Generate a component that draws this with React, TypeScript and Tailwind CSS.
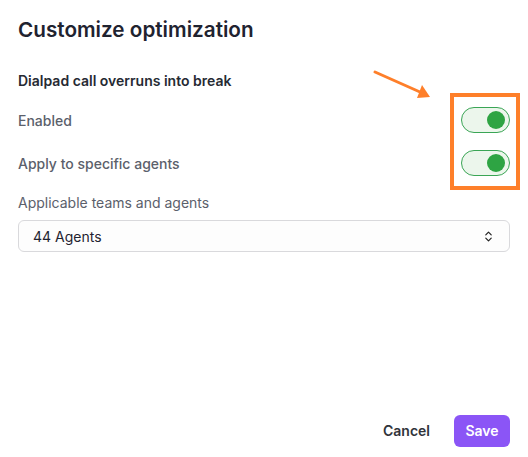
import { ChevronsUpDown } from "lucide-react";

function Toggle() {
    return (
        <div className="w-[49px] h-[26px] rounded-full border border-[#3aa555] bg-[#ecf6ec] flex items-center justify-end pr-[4px]">
            <div className="w-[18px] h-[18px] rounded-full bg-[#2ea443]" />
        </div>
    );
}

export default function App() {
    return (
        <div className="relative w-[528px] h-[457px] bg-white px-[18px] flex flex-col font-['Inter',sans-serif] text-[#1f2330]">
            <h2 className="pt-[18px] text-[20.7px] leading-[24px] font-semibold">Customize optimization</h2>

            <p className="mt-[29px] text-sm leading-5 font-semibold text-[#262a33]">Dialpad call overruns into break</p>

            {/* Toggles */}
            <div className="mt-[16px] flex items-center justify-between h-[26px]">
                <span className="pt-[2px] text-sm font-medium text-[#5b606b]">Enabled</span>
                <Toggle />
            </div>
            <div className="mt-[17px] flex items-center justify-between h-[26px]">
                <span className="pt-[2px] text-sm font-medium text-[#5b606b]">Apply to specific agents</span>
                <Toggle />
            </div>

            <label className="mt-[17px] text-sm leading-5 text-[#5b606b]">Applicable teams and agents</label>
            <button className="mt-[7px] h-[32px] w-full rounded-md border border-[#d9d9dc] bg-[#fdfdfd] pl-[14px] pr-[14px] pt-[1px] flex items-center justify-between text-sm text-[#1f2330]">
                44 Agents
                <ChevronsUpDown className="w-[13px] h-[13px] text-[#222]" strokeWidth={2.25} />
            </button>

            {/* Footer */}
            <div className="mt-auto pb-[10px] flex items-center justify-end gap-[24px]">
                <button className="text-sm font-semibold text-[#30333a]">Cancel</button>
                <button className="h-[32px] w-[56px] rounded-md bg-[#8b55f6] text-sm font-semibold text-white">Save</button>
            </div>

            {/* Annotation */}
            <div className="absolute left-[450px] top-[93px] w-[70px] h-[97px] border-[4px] border-[#fe7f2a]" />
            <svg className="absolute left-[370px] top-[66px]" width="66" height="38" viewBox="0 0 66 38">
                <line x1="5" y1="6" x2="50" y2="26" stroke="#fe7f2a" strokeWidth="3" strokeLinecap="round" />
                <polygon points="60,31 47,32 52,19" fill="#fe7f2a" />
            </svg>
        </div>
    );
}
